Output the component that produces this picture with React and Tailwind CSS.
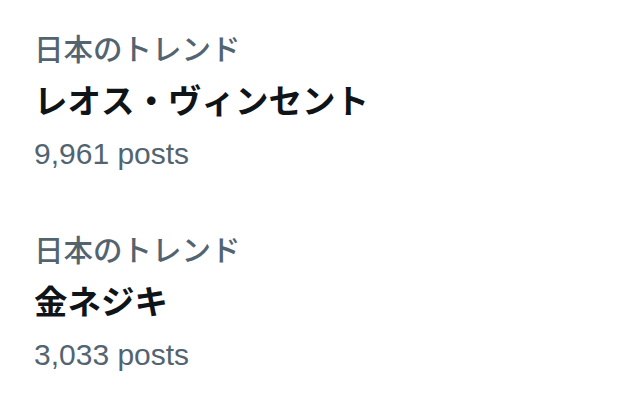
import React from 'react';

const trends = [
  { category: '日本のトレンド', title: 'レオス・ヴィンセント', posts: '9,961 posts' },
  { category: '日本のトレンド', title: '金ネジキ', posts: '3,033 posts' },
];

function TrendItem({ category, title, posts }) {
  return (
    <div className="flex flex-col">
      <span className="text-[29.5px] leading-[52px] font-medium text-[#536471]">{category}</span>
      <span className="text-[33.5px] leading-[52px] font-bold text-[#0f1419]">{title}</span>
      <span className="text-[30px] leading-[52px] text-[#536471]">{posts}</span>
    </div>
  );
}

export default function App() {
  return (
    <div
      className="w-[636px] h-[402px] bg-white pl-[34px] pt-[24px] flex flex-col gap-[45px] overflow-hidden"
      style={{ fontFamily: '"Liberation Sans", "Noto Sans CJK JP", sans-serif' }}
    >
      {trends.map((t, i) => (
        <TrendItem key={i} {...t} />
      ))}
    </div>
  );
}
